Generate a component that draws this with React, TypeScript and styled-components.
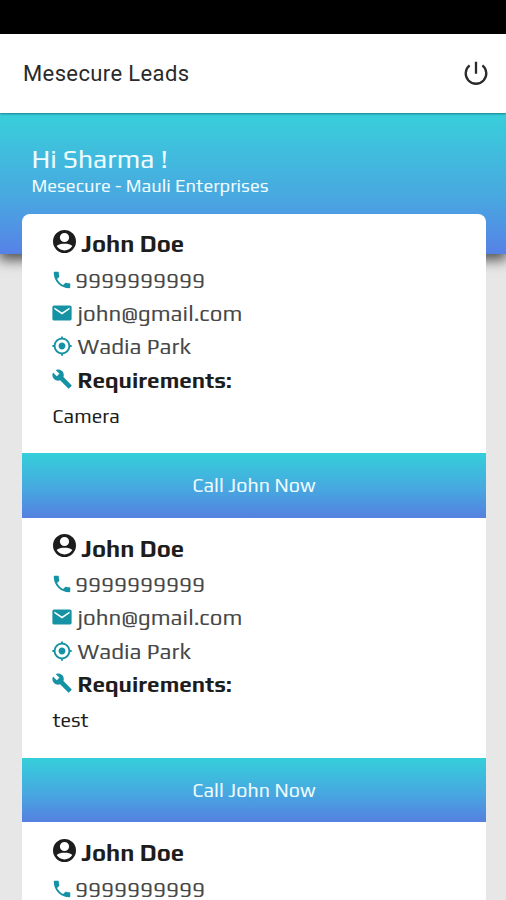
import React from 'react';
import styled, { createGlobalStyle } from 'styled-components';
import { IoMdCall, IoMdMail, IoMdLocate, IoMdBuild } from 'react-icons/io';

const GlobalStyle = createGlobalStyle`
  * { box-sizing: border-box; }
  html, body { margin: 0; background: #e7e7e7; }
  body { height: 900px; overflow: hidden; font-family: Play, "Noto Sans", sans-serif; }
`;

const Screen = styled.div`
  height: 900px;
  overflow: hidden;
  background: #e7e7e7;
`;

const StatusBar = styled.div`
  height: 34px;
  background: #000;
`;

const Toolbar = styled.header`
  position: relative;
  z-index: 1;
  height: 79px;
  padding: 0 18px 0 23px;
  display: flex;
  align-items: center;
  justify-content: space-between;
  background: #fff;
  box-shadow: 0 1px 2px rgba(0, 60, 80, 0.55);
`;

const Title = styled.h1`
  margin: 0;
  font: 450 22px/30px Roboto, sans-serif;
  letter-spacing: 0.38px;
  color: #2a2a2a;
`;

const Power = styled.svg`
  width: 24px;
  height: 24px;
  margin-bottom: 1px;
  fill: none;
  stroke: #2a2a2a;
  stroke-width: 2.3;
`;

const Banner = styled.section`
  height: 141px;
  padding: 30px 31.5px 0;
  color: #eefcff;
  background: linear-gradient(#38cfda, #48a9e0 58%, #5682e6);
  box-shadow: 0 5px 12px 1px rgba(0, 0, 0, 0.65);
`;

const Line = styled.div<{ $size: number; $height: number; $bold?: boolean }>`
  width: max-content;
  white-space: nowrap;
  font-size: ${p => p.$size}px;
  line-height: ${p => p.$height}px;
  font-weight: ${p => (p.$bold ? 700 : 400)};
`;

const Card = styled.main`
  position: relative;
  width: 464px;
  margin: -40px 0 0 22px;
  overflow: hidden;
  border-radius: 8px 8px 0 0;
  background: #fff;
`;

const Details = styled.div`
  height: 240px;
  padding: 11px 30.5px 0;

  &:first-child {
    height: 239px;
    padding-top: 10px;
  }
`;

const Row = styled.div<{ $height: number; $gap: number; $dark?: boolean }>`
  height: ${p => p.$height}px;
  display: flex;
  align-items: center;
  gap: ${p => p.$gap}px;
  color: ${p => (p.$dark ? '#1d1d1d' : '#484848')};
`;

const Icon = styled.span<{ $lift?: number }>`
  display: flex;
  flex: none;
  margin: 0 0 ${p => p.$lift ?? 0}px -1.5px;
  font-size: 22px;
  color: #1593a5;
`;

const Avatar = styled.svg`
  flex: none;
  width: 23px;
  height: 23px;
  margin-bottom: 5px;
  fill: #1d1d1d;
`;

const CallButton = styled.button`
  display: flex;
  align-items: center;
  justify-content: center;
  width: 100%;
  height: 64.6px;
  padding: 0;
  border: 0;
  font-family: inherit;
  color: #eefcff;
  background: linear-gradient(#35cfda, #47a8e0 55%, #5580e0);
`;

const notes = ['Camera', 'test', 'Camera'];

function Lead({ note }: { note: string }) {
  return (
    <>
      <Details>
        <Row $height={39} $gap={5.8} $dark>
          <Avatar viewBox="0 0 20 20">
            <path
              fillRule="evenodd"
              d="M10 0a10 10 0 1 0 0 20a10 10 0 1 0 0-20zM10 2.5a4 4 0 1 1 0 8a4 4 0 1 1 0-8zM3.2 14C4.4 12.2 7.4 11.9 10 11.9S15.6 12.2 16.8 14A8 8 0 0 1 3.2 14z"
            />
          </Avatar>
          <Line $size={23.8} $height={31} $bold>John Doe</Line>
        </Row>
        <Row $height={33} $gap={2}>
          <Icon><IoMdCall /></Icon>
          <Line $size={22.4} $height={30}>9999999999</Line>
        </Row>
        <Row $height={33} $gap={4.5}>
          <Icon><IoMdMail /></Icon>
          <Line $size={22.4} $height={30}>john@gmail.com</Line>
        </Row>
        <Row $height={34} $gap={4.5}>
          <Icon><IoMdLocate /></Icon>
          <Line $size={22.4} $height={30}>Wadia Park</Line>
        </Row>
        <Row $height={33} $gap={4.5} $dark>
          <Icon $lift={2}><IoMdBuild /></Icon>
          <Line $size={22.4} $height={30} $bold>Requirements:</Line>
        </Row>
        <Row $height={39} $gap={0} $dark>
          <Line $size={19.7} $height={28}>{note}</Line>
        </Row>
      </Details>
      <CallButton><Line $size={19.7} $height={28}>Call John Now</Line></CallButton>
    </>
  );
}

export default function App() {
  return (
    <Screen>
      <GlobalStyle />
      <StatusBar />
      <Toolbar>
        <Title>Mesecure Leads</Title>
        <Power viewBox="0 0 24 24">
          <path d="M12 0.8v12M5.6 4.4a10.3 10.3 0 1 0 12.8 0" />
        </Power>
      </Toolbar>
      <Banner>
        <Line $size={26.5} $height={32}>Hi Sharma !</Line>
        <Line $size={18.3} $height={21}>Mesecure - Mauli Enterprises</Line>
      </Banner>
      <Card>
        {notes.map((note, i) => <Lead key={i} note={note} />)}
      </Card>
    </Screen>
  );
}
